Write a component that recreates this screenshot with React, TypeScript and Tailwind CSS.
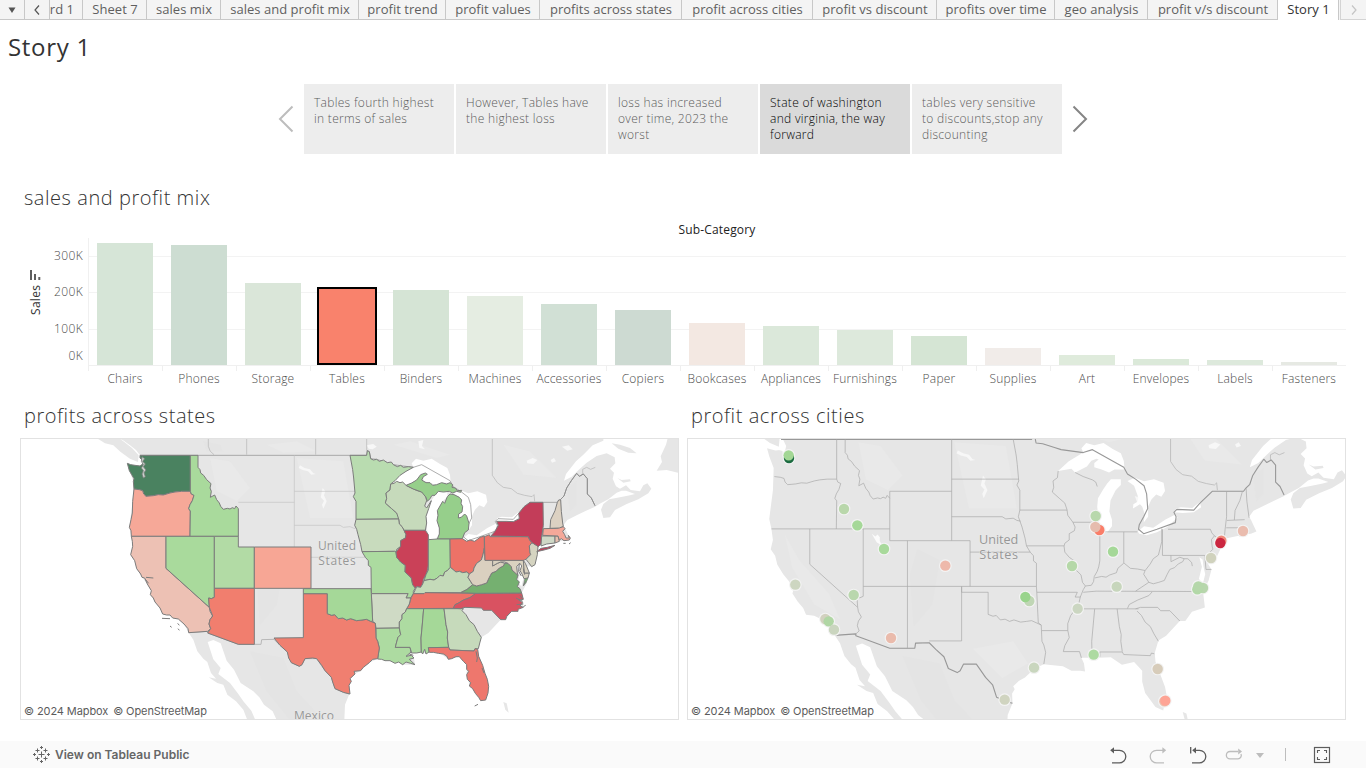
import React from "react";

/* ---------- geography: one drawing space shared by both maps ---------- */

type Shape = { id: string; dx: number; fill: string | null; pts: string };

const NO = null;

const STATES: Shape[] = [
  { id: "WA", dx: 0, fill: "#4a8260", pts: "52,76 62,80 75,82 90,84 98,78 97,66 90,60 90,52 241,52 241,160 215,160 195,162 180,165 160,171 145,170 130,173 108,175 101,168 98,158 88,155 72,153 70,130 72,122 65,110 58,98" },
  { id: "OR", dx: 0, fill: "#f6a898", pts: "72,153 88,155 98,158 101,168 108,175 130,173 145,170 160,171 180,165 195,162 215,160 241,160 244,168 252,172 247,188 240,200 236,212 241,219 240,295 64,295 63,278 58,268 63,245 67,225 68,190" },
  { id: "ID", dx: 0, fill: "#a9da9c", pts: "241,52 264,52 264,88 270,95 272,105 281,112 290,125 303,137 300,150 304,160 301,178 314,171 320,185 328,195 332,205 340,214 352,211 360,213 367,209 374,212 378,204 385,212 385,295 240,295 241,219 236,212 240,200 247,188 252,172 244,168 241,160" },
  { id: "CA", dx: 0, fill: "#edc1b4", pts: "64,295 168,295 168,391 298,508 300,520 308,534 300,545 297,558 302,572 293,580 236,584 234,572 222,558 205,543 188,540 180,531 170,531 158,528 150,510 135,492 130,480 121,470 124,458 112,438 104,420 96,418 92,408 80,392 74,368 62,350 68,325 67,310" },
  { id: "NV", dx: 0, fill: "#a9da9c", pts: "168,295 313,295 313,478 304,482 296,480 298,508 168,391" },
  { id: "UT", dx: 0, fill: "#b2dba5", pts: "313,295 385,295 385,327 433,327 433,451 313,451" },
  { id: "AZ", dx: 0, fill: "#f17e6e", pts: "313,451 433,451 433,619 385,619 293,585 302,572 297,558 300,545 308,534 298,508 296,480 304,482 313,478" },
  { id: "CO", dx: 0, fill: "#f7a695", pts: "433,327 603,327 603,451 433,451" },
  { id: "NM", dx: 0, fill: NO, pts: "433,451 580,451 580,599 492,600 496,604 455,605 453,619 433,619" },
  { id: "MN", dx: 570, fill: "#b9dcb0", pts: "150,52 200,52 202,38 208,41 212,62 220,66 230,64 238,70 250,66 262,74 274,72 280,80 292,86 302,82 310,88 325,86 340,88 318,100 300,112 285,128 272,138 270,156 258,165 260,182 256,195 275,212 290,225 295,232 296,243 168,244 168,190 160,176 165,165 161,120 158,95" },
  { id: "WI", dx: 570, fill: "#c6dabb", pts: "272,138 282,136 290,130 300,134 308,132 318,142 340,153 352,158 365,162 374,168 378,180 380,188 374,204 380,210 394,188 386,212 378,235 380,255 376,277 312,277 306,266 298,258 296,243 290,225 275,212 256,195 260,182 258,165 270,156" },
  { id: "UP", dx: 570, fill: "#96cf8b", pts: "318,142 335,135 350,126 362,110 376,105 382,109 370,116 365,126 378,134 390,134 398,142 410,140 425,134 440,138 450,134 458,140 456,148 466,150 472,158 485,157 482,163 470,160 458,165 448,160 430,162 415,160 405,172 396,172 390,182 382,190 378,178 365,162 340,153" },
  { id: "MI", dx: 570, fill: "#96cf8b", pts: "412,303 418,288 418,270 411,248 414,232 412,218 420,204 428,190 434,196 442,176 450,168 462,170 478,178 485,186 483,196 488,206 486,222 476,228 475,240 484,238 494,228 500,234 507,256 505,276 494,284 487,302 450,303" },
  { id: "IA", dx: 570, fill: "#c8dbbd", pts: "168,244 296,243 298,258 306,266 312,277 318,290 316,300 302,308 302,325 290,334 288,342 284,340 186,341 182,320 174,290 170,274 164,262" },
  { id: "MO", dx: 570, fill: "#acdba0", pts: "186,341 284,340 288,342 290,358 302,372 316,382 315,402 326,412 334,420 338,440 346,450 340,460 340,468 332,480 318,480 324,467 214,467 213,388 205,382 205,368 196,358" },
  { id: "IL", dx: 570, fill: "#ca4158", pts: "312,277 376,277 385,290 385,382 382,398 378,410 370,424 368,438 362,448 350,446 346,450 338,440 334,420 326,412 315,402 316,382 302,372 290,358 288,342 302,325 302,308 316,300 318,290" },
  { id: "IN", dx: 570, fill: "#aadb9e", pts: "385,305 412,303 450,303 451,388 442,398 434,402 430,414 420,412 412,420 402,426 390,424 372,428 378,410 385,396" },
  { id: "OH", dx: 570, fill: "#ed7267", pts: "450,303 487,302 500,310 510,306 524,310 540,298 553,294 553,330 549,350 544,366 530,376 522,390 520,400 508,408 500,402 488,404 478,400 468,402 451,388" },
  { id: "KY", dx: 570, fill: "#c4dab9", pts: "451,388 468,402 478,400 488,404 500,402 508,408 504,418 518,440 500,455 482,464 375,464 372,467 340,467 346,455 350,446 362,448 368,438 372,428 390,424 402,426 412,420 420,412 430,414 434,402 442,398" },
  { id: "TN", dx: 570, fill: "#ed7469", pts: "340,467 372,467 375,464 527,466 518,476 500,482 488,488 474,496 465,500 460,511 320,512 328,498 334,478" },
  { id: "AR", dx: 570, fill: "#cfdac5", pts: "214,467 324,467 318,480 332,480 328,498 320,512 316,522 306,530 306,542 298,552 298,570 228,571 226,556 218,550" },
  { id: "LA", dx: 570, fill: "#addba1", pts: "228,571 298,570 302,590 294,598 290,612 286,628 330,628 333,642 324,650 318,655 334,652 342,660 328,664 345,680 332,676 318,672 308,680 296,672 285,676 270,668 255,668 245,664 233,663 238,630 233,610 228,600" },
  { id: "MS", dx: 570, fill: "#addba1", pts: "320,512 371,512 366,570 363,600 364,642 350,645 335,645 330,628 286,628 290,612 294,598 302,590 298,570 298,552 306,542 306,530 316,522" },
  { id: "AL", dx: 570, fill: "#a5d898", pts: "371,512 432,512 438,560 443,582 442,600 446,628 385,629 387,642 378,648 374,634 368,648 364,642 363,600 366,570" },
  { id: "GA", dx: 570, fill: "#c6dabb", pts: "432,512 490,512 486,518 498,530 508,548 522,560 532,580 544,598 540,612 535,632 525,632 522,639 450,636 446,628 442,600 443,582 438,560" },
  { id: "FL", dx: 570, fill: "#ee776d", pts: "385,629 446,628 450,636 522,639 525,632 533,634 536,655 548,682 555,706 562,724 566,745 564,765 557,786 542,788 536,778 526,766 518,752 508,744 512,734 502,724 500,710 506,700 500,694 500,680 490,670 478,656 468,656 455,662 445,664 440,654 430,648 415,646 400,643 388,643" },
  { id: "NC", dx: 990, fill: "#d95261", pts: "107,466 245,465 250,484 236,486 248,494 240,504 250,508 234,514 234,520 215,520 200,535 197,545 182,545 155,517 130,517 125,510 75,508 62,512 40,511 45,500 54,496 70,486 88,480" },
  { id: "VA", dx: 990, fill: "#75b070", pts: "62,464 82,454 98,440 110,444 125,440 140,435 148,418 155,405 168,400 178,390 190,384 194,376 204,376 214,386 216,396 234,412 230,424 238,432 232,446 240,452 245,465 107,466" },
  { id: "WV", dx: 990, fill: "#dad0c0", pts: "88,408 100,400 102,390 110,376 124,366 129,350 133,330 135,367 158,367 158,384 172,376 182,372 194,376 190,384 178,390 168,400 155,405 148,418 140,435 125,440 110,444 98,440 84,418" },
  { id: "MD", dx: 990, fill: "#dad2c0", pts: "158,367 250,367 253,405 268,405 264,420 252,422 246,408 240,398 245,384 240,376 230,385 232,405 234,412 216,396 214,386 204,376 194,372 182,372 172,376 158,384" },
  { id: "DE", dx: 990, fill: "#dad2c0", pts: "250,367 256,376 262,390 268,405 253,405" },
  { id: "PA", dx: 990, fill: "#ed7469", pts: "133,296 148,290 150,296 265,296 269,306 276,314 268,324 270,344 272,350 258,364 250,367 135,367" },
  { id: "NJ", dx: 990, fill: "#d5d4c1", pts: "276,314 294,324 292,350 285,380 275,386 266,374 258,364 272,350 270,344 268,324" },
  { id: "NY", dx: 990, fill: "#c33d59", pts: "153,294 165,280 175,262 170,250 200,250 220,251 238,242 236,226 252,206 270,193 309,193 310,262 305,296 303,318 295,326 276,314 269,306 265,296" },
  { id: "LI", dx: 990, fill: "#c33d59", pts: "290,341 303,331 322,328 345,322 330,331 312,336" },
  { id: "CT", dx: 990, fill: "#cfd8c6", pts: "305,294 345,294 345,315 320,318 303,324" },
  { id: "RI", dx: 990, fill: "#e8c0b0", pts: "345,294 354,294 358,310 345,315" },
  { id: "MA", dx: 990, fill: "#f5a899", pts: "310,272 350,271 360,268 370,266 375,272 368,280 374,290 378,300 388,300 385,292 391,300 388,306 372,308 364,302 358,306 354,294 308,292" },
  { id: "NH", dx: 990, fill: "#dcd1c2", pts: "352,193 356,186 362,185 364,220 368,255 370,265 358,270 330,271 332,245 345,218" },
  { id: "TX", dx: 570, fill: "#f07f70", pts: "10,467 82,467 82,527 95,532 104,530 115,542 128,540 140,546 152,542 170,548 186,546 200,544 212,550 226,556 228,600 233,610 238,630 233,662 218,664 208,674 190,688 182,698 162,700 165,708 150,722 154,730 147,742 150,768 130,763 105,752 98,732 94,718 75,698 65,682 50,662 38,660 15,662 6,680 -2,685 -26,674 -34,660 -38,642 -60,622 -78,600 10,599" },
  { id: "OK", dx: 570, fill: "#a5d898", pts: "10,452 213,452 214,467 218,550 212,550 200,544 186,546 170,548 152,542 140,546 128,540 115,542 104,530 95,532 82,527 82,467 10,467" },
];

const MAINLAND =
  "M20,0 L38,6 60,22 78,36 90,52 90,66 95,80 75,82 52,76 58,98 70,130 68,190 58,268 64,295 68,325 62,350 74,368 80,392 96,418 112,438 124,458 121,470 135,492 150,510 158,528 180,531 205,543 222,558 236,584 250,605 262,640 280,662 292,672 303,705 318,722 296,718 322,735 340,740 352,770 378,790 400,815 412,846 " +
  "L703,846 705,800 718,768 717,742 724,730 720,722 735,708 752,698 778,674 803,662 815,664 855,668 878,680 902,680 915,682 912,660 905,645 950,645 985,643 1015,664 1048,656 1070,680 1070,710 1078,740 1106,778 1127,788 1136,745 1132,724 1106,655 1104,632 1114,598 1135,585 1172,545 1187,545 1205,520 1240,508 1235,465 1250,436 1258,405 1245,384 1265,386 1282,350 1284,324 1293,322 1348,310 1365,308 1380,302 1365,270 1360,262 1372,246 1400,232 1425,220 1455,206 1472,196 1495,184 1520,164 1535,158 1548,158 " +
  "L1575,168 1560,172 1530,178 1498,184 1480,198 1473,215 1480,240 1500,238 1515,216 1550,198 1585,184 1615,166 1624,152 1612,136 1600,142 1590,160 1562,156 1548,142 1530,152 1518,145 1508,122 1512,104 1500,92 1516,76 1514,58 1490,46 1460,54 1430,74 1408,94 1385,116 1362,128 1368,108 1398,70 1420,50 1448,22 1480,8 1484,-100 L20,-100 Z";

const ISLES = [
  "M-50,-10 L-40,0 -15,16 10,22 32,42 60,62 84,72 86,52 66,30 38,8 10,-12Z",
  "M1505,16 L1530,20 1560,30 1580,46 1555,44 1525,32Z",
  "M1676,-10 L1668,20 1652,55 1656,72 1640,98 1670,96 1720,108 1720,-10Z",
  "M1522,120 L1535,126 1560,124 1562,130 1540,134Z",
  "M1180,792 L1190,796 1196,824 1186,815Z",
];

const WATER = [
  "M293,612 L310,606 332,616 342,645 350,668 372,695 392,735 430,760 448,778 462,800 488,820 500,846 436,846 424,818 400,790 385,768 360,735 325,708 332,690 310,664Z",
  "M842,138 L870,112 910,88 905,76 918,62 940,68 965,62 990,78 1012,90 1020,110 1022,134 995,134 980,142 960,134 940,128 940,116 952,107 946,105 932,110 920,126 888,142 878,132Z",
  "M950,212 L964,188 975,172 985,160 1012,160 1012,176 998,190 984,218 981,248 988,270 988,288 975,305 960,305 953,290 950,258 948,235Z",
  "M1030,165 L1050,156 1075,166 1102,160 1128,170 1132,192 1122,208 1108,202 1095,215 1086,234 1086,262 1074,278 1077,256 1070,234 1064,228 1045,240 1046,228 1056,222 1058,206 1048,178Z",
  "M1058,302 L1075,288 1100,292 1132,270 1160,256 1166,264 1138,290 1110,304 1082,312 1062,308Z",
  "M1156,250 L1162,240 1175,236 1206,238 1226,222 1230,236 1210,250 1180,252Z",
  "M1225,372 L1232,398 1224,430 1234,446 1241,418 1236,396 1234,378Z",
  "M88,52 L96,54 104,70 98,96 104,118 96,110 94,84 82,80 90,66Z",
];

const SMALL_WATER = [
  "M570,82 L584,90 600,94 610,106 618,108 604,110 594,100 578,96 566,90Z",
  "M638,150 L646,160 642,172 650,190 640,212 636,200 642,188 632,178Z",
  "M770,22 L790,18 800,26 788,34 776,32Z",
  "M925,10 L940,6 936,24 945,34 928,30Z",
  "M1250,68 L1268,60 1282,66 1270,78 1252,76Z",
  "M1322,66 L1332,60 1338,70 1326,74Z",
  "M1356,26 L1376,22 1388,34 1372,38Z",
  "M1050,206 L1060,210 1056,222Z",
];

const PROVINCES = [
  "M295,-60 V25 Q298,42 312,50",
  "M410,-60 V50",
  "M617,-60 V50",
  "M770,-60 V38",
  "M1147,-60 V112 L1162,134 1180,148 1204,152 1222,166 1244,172 1266,176 1272,170 1274,190",
  "M1418,108 L1418,94 1430,88 1442,94 1456,88",
];

const BORDER =
  "M90,52 H770 L772,38 778,41 782,62 800,64 832,74 850,80 895,86 910,88 935,80 1020,128 1030,146 1052,160 1075,178 1082,200 1085,240 1074,262 1062,284 1060,296 1074,308 1110,296 1160,278 1162,262 1156,250 1164,242 1210,244 1226,226 1260,193 H1345 L1350,186 1362,174 1370,150 1384,128 1400,106 1408,115 1420,108 1432,122 1432,168 1444,180 1455,203";

const MEX_BORDER =
  "M236,584 L293,580 293,585 385,619 453,619 455,605 492,604 510,622 532,642 544,674 568,685 576,680 585,662 620,662 645,698 664,718 675,752 700,763 718,768";

const ISLETS =
  "M156,541 L180,542 M180,564 L185,568 M203,556 L208,562 M204,572 L208,577 M1094,804 L1104,799 M1360,316 L1367,316 M1377,318 L1382,314 M108,418 L130,420 M106,424 L116,436 M1246,430 L1240,444 M1240,506 L1247,502 M898,648 L910,652";

const SOUND = "M96,56 L104,62 98,70 106,78 100,86 108,96 102,104 106,116 100,120 96,108 100,98 94,90 100,80 94,70Z";

function Basemap({ cities }: { cities?: boolean }) {
  return (
    <g strokeLinejoin="round">
      <path d={MAINLAND} fill="#e6e6e6" />
      {ISLES.map((d) => (
        <path key={d} d={d} fill="#e6e6e6" />
      ))}
      <g fill="#ececec" opacity="0.5">
        <path d="M300,60 L360,70 420,150 380,190 320,160Z" />
        <path d="M560,60 L700,70 730,240 600,240Z" />
        <path d="M850,20 L900,10 1020,50 980,60Z" />
        <path d="M610,620 L720,600 760,660 690,700Z" />
        <path d="M100,310 L140,380 220,470 250,540 180,500 120,400Z" />
        <path d="M1180,20 L1260,40 1340,120 1240,110Z" />
        <path d="M470,20 L560,10 620,40 520,44Z" />
      </g>
      <g fill="#e0e0e0" opacity="0.3">
        <path d="M420,640 L520,660 560,760 640,846 540,846 470,760Z" />
        <path d="M460,350 L520,380 500,500 450,560 440,420Z" />
        <path d="M280,10 L330,20 340,40 290,40Z" />
        <path d="M1370,150 L1400,130 1400,200 1380,220Z" />
      </g>
      {WATER.map((d) => (
        <path key={d} d={d} fill="#ffffff" />
      ))}
      {SMALL_WATER.map((d) => (
        <path key={d} d={d} fill="#f7f7f7" />
      ))}
      {cities && <path d="M336,308 L346,316 352,310 358,318 358,328 364,340 350,332Z" fill="#fbfbfb" />}
      <g fill="none" stroke="#b4b4b4" strokeWidth="2">
        {PROVINCES.map((d) => (
          <path key={d} d={d} />
        ))}
      </g>
      <path d={BORDER} fill="none" stroke={cities ? "#989898" : "#a0a0a0"} strokeWidth={cities ? 3 : 2.6} />
      <path d={MEX_BORDER} fill="none" stroke={cities ? "#989898" : "#b8b8b8"} strokeWidth="3" />
    </g>
  );
}

function Borders() {
  return (
    <g fill="none" stroke="#a9a9a9" strokeWidth="1.9" strokeLinejoin="round">
      <path d="M72,153 L88,155 98,158 101,168 108,175 130,173 145,170 160,171 180,165 195,162 215,160 241,160 M241,52 V160 L244,168 252,172 247,188 240,200 236,212 241,219 240,295 M64,295 H385 M168,295 V391 L298,508 300,520 308,534 300,545 297,558 302,572 293,580 M313,295 V478 L304,482 296,480 298,508 M385,193 V327 H603 V451 M433,327 V619 M313,451 H783 M385,193 H553 M553,52 V327 M264,52 V88 L270,95 272,105 281,112 290,125 303,137 300,150 304,160 301,178 314,171 320,185 328,195 332,205 340,214 352,211 360,213 367,209 374,212 378,204 385,212 M580,451 V599 H492" />
      <g transform="translate(570 0)">
        <path d="M150,52 L158,95 161,120 165,165 160,176 168,190 168,244 164,262 174,290 182,320 186,341 196,358 205,368 205,382 213,388 V452 L214,467 218,550 226,556 228,600 233,610 238,630 233,662 M-17,160 H165 M-17,262 H120 L130,268 150,266 160,272 170,274 M33,358 H196 M168,244 H296 M296,243 L290,225 275,212 256,195 260,182 258,165 270,156 272,138 M296,243 L298,258 312,277 318,290 316,300 302,308 302,325 290,334 288,342 290,358 302,372 316,382 315,402 326,412 334,420 338,440 346,450 340,460 332,480 328,498 320,512 306,530 298,552 298,570 302,590 290,612 286,628 H330 L335,645 M186,341 H288 M312,277 H376 M385,305 V382 L382,398 378,410 370,424 368,438 362,448 346,450 M385,303 H450 V388 L434,402 430,414 412,420 402,426 390,424 372,428 M450,303 H487 M451,388 L468,402 488,404 508,408 522,390 530,376 544,366 553,330 V294 M508,408 L504,418 518,440 482,464 M214,467 H324 L318,480 H332 M340,467 L375,464 665,465 M527,466 L518,476 488,488 465,500 460,511 M320,512 H490 M228,571 H298 M371,512 L363,600 364,642 M432,512 L438,560 443,582 442,600 446,628 M385,642 V629 H446 L450,636 522,639 525,632 533,634 M10,452 V467 H82 V527 L95,532 104,530 115,542 128,540 140,546 152,542 170,548 186,546 200,544 226,556 M318,142 L340,153 365,162 374,168 378,180" />
      </g>
      <g transform="translate(990 0)">
        <path d="M66,518 L78,530 88,548 102,560 112,580 124,600 M62,512 L75,508 122,508 130,517 155,517 182,545 M98,440 L110,444 125,440 140,435 148,418 155,405 168,400 178,390 190,384 194,376 182,372 158,384 158,367 M194,376 L204,376 214,386 216,396 M135,296 V367 H250 L253,405 H268 M150,296 H265 L269,306 276,314 268,324 270,344 272,350 258,364 M276,314 L295,326 M309,193 V262 L305,296 303,318 M310,272 L358,270 M308,292 H354 L358,306 M345,294 V315 M352,193 L345,218 332,245 330,271 M362,185 L364,220 370,265" />
      </g>
    </g>
  );
}

function Attribution() {
  return (
    <div className="absolute bottom-0 left-[1px] flex h-[16px] w-[187px] items-center gap-[5px] bg-white/70 pl-[2px] font-['Inter','Liberation_Sans',sans-serif] text-[11px] leading-none tracking-[-0.1px] whitespace-nowrap text-[#5b5b5b]">
      <span>© 2024 Mapbox</span>
      <span>© OpenStreetMap</span>
    </div>
  );
}

const LABEL = "'Open Sans','Noto Sans',sans-serif";

function StatesMap() {
  return (
    <div className="relative h-[282px] w-[659px] overflow-hidden border border-[#e2e2e2] bg-white">
      <svg className="block h-[280px] w-[657px]" viewBox="-267 3 1971 840">
        <Basemap />
        <path
          d="M385,193 H553 M553,52 V327 M553,160 H735 M553,262 H690 L700,268 720,266 735,272 M603,358 H766"
          fill="none"
          stroke="#c2c2c2"
          strokeWidth="2"
        />
        <g stroke="#7c7c7c" strokeWidth="3" strokeLinejoin="round">
          {STATES.filter((s) => s.fill).map((s) => (
            <polygon key={s.id} points={s.pts} fill={s.fill as string} transform={`translate(${s.dx} 0)`} />
          ))}
          <path d={SOUND} fill="#c9d2cd" strokeWidth="2.4" />
          <path d="M1244,424 L1254,420 1248,434 1240,444Z" fill="#75b070" strokeWidth="2" />
          <path d={ISLETS} fill="none" strokeWidth="3" />
          <path
            d="M1228,376 L1226,400 1234,414 M1240,392 L1244,410 M1218,480 L1238,490 M1220,500 L1240,498 M1230,472 L1236,482 M1098,640 L1102,660 1100,672 M1116,690 L1122,705"
            fill="none"
            strokeWidth="3"
          />
        </g>
        <path
          d="M1350,186 L1362,174 1370,150 1384,128 1400,106 1408,115 1420,108 1432,122 1432,168 1444,180 1455,203"
          fill="none"
          stroke="#909090"
          strokeWidth="3"
        />
        <g fontFamily={LABEL} fontSize="36" fill="#979797" textAnchor="middle" stroke="#ebebeb" strokeWidth="3" paintOrder="stroke">
          <text x="681" y="335" textLength="114">United</text>
          <text x="681" y="380" textLength="112">States</text>
          <text x="612" y="847" textLength="120">Mexico</text>
        </g>
      </svg>
      <Attribution />
    </div>
  );
}

const CITIES: [number, number, string][] = [
  [306, 60, "#1c6b41"],
  [305, 52, "#a3d795"],
  [471, 213, "#b9d7ab"],
  [511, 262, "#a5d898"],
  [591, 333, "#a8d99b"],
  [325, 440, "#cdd6c1"],
  [500, 471, "#b9d7ad"],
  [415, 543, "#d2d1bf"],
  [425, 550, "#b0d6a4"],
  [441, 575, "#cad5bf"],
  [612, 600, "#eabbac"],
  [1226, 234, "#b8d8ac"],
  [1237, 276, "#fa7d68"],
  [1225, 267, "#e6bcae"],
  [1278, 341, "#a5d898"],
  [1155, 384, "#b5d8a8"],
  [1289, 446, "#c7d6bc"],
  [1027, 489, "#c0d6b5"],
  [1015, 477, "#99d48c"],
  [1172, 512, "#cbd6c1"],
  [1220, 650, "#addaa1"],
  [1041, 689, "#c9d6be"],
  [953, 785, "#d0d4c0"],
  [775, 383, "#eeb9ab"],
  [1668, 279, "#eabcae"],
  [1603, 308, "#f08a79"],
  [1600, 315, "#cb2640"],
  [1572, 360, "#d0d2bd"],
  [1548, 450, "#b7d6ac"],
  [1531, 454, "#b2d8a7"],
  [1534, 445, "#b5d7aa"],
  [1412, 693, "#d7ccba"],
  [1432, 790, "#eac0ae"],
  [1435, 788, "#fea495"],
];

function CitiesMap() {
  return (
    <div className="relative h-[282px] w-[659px] overflow-hidden border border-[#e2e2e2] bg-white">
      <svg className="block h-[280px] w-[657px]" viewBox="3 3 1971 840">
        <g transform="translate(182.6 -53.5) scale(1.1056)">
          <Basemap cities />
          <Borders />
        </g>
        <g fontFamily={LABEL} fontSize="38" fill="#979797" textAnchor="middle" stroke="#ebebeb" strokeWidth="3" paintOrder="stroke">
          <text x="935" y="317" textLength="118">United</text>
          <text x="935" y="363" textLength="116">States</text>
        </g>
        {CITIES.map(([x, y]) => (
          <circle key={`h${x}-${y}`} cx={x} cy={y} r="19" fill="#f3f3f3" />
        ))}
        {CITIES.map(([x, y, c]) => (
          <circle key={`${x}-${y}`} cx={x} cy={y} r="15.6" fill={c} />
        ))}
      </svg>
      <Attribution />
    </div>
  );
}

/* ---------- tabs ---------- */

const TABS: [string, string][] = [
  ["Sheet 7", "w-[64px]"],
  ["sales mix", "w-[74px]"],
  ["sales and profit mix", "w-[138px]"],
  ["profit trend", "w-[87px]"],
  ["profit values", "w-[94px]"],
  ["profits across states", "w-[142px]"],
  ["profit across cities", "w-[131px]"],
  ["profit vs discount", "w-[124px]"],
  ["profits over time", "w-[118px]"],
  ["geo analysis", "w-[93px]"],
  ["profit v/s discount", "w-[130px]"],
];

function TabBar() {
  return (
    <div className="flex h-[20px] w-full overflow-hidden bg-[#f4f4f4] text-[13px] leading-[18px] tracking-[0.03px] whitespace-nowrap text-[#5f5f5f]">
      <div className="flex w-[25px] items-center justify-center border-r border-b border-[#c8c8c8]">
        <svg className="h-[6px] w-[8px]" viewBox="0 0 8 6">
          <path d="M0.5,0.5 H7.5 L4,6Z" fill="#555" />
        </svg>
      </div>
      <div className="flex w-[24px] items-center justify-center border-b border-[#c8c8c8]">
        <svg className="h-[10px] w-[6px]" viewBox="0 0 6 10">
          <path d="M5,0.5 L1,5 5,9.5" fill="none" stroke="#555" strokeWidth="1.2" />
        </svg>
      </div>
      <div className="flex w-[34px] justify-end overflow-hidden border-r border-b border-l border-[#c8c8c8] pr-[8px]">ard 1</div>
      {TABS.map(([t, w]) => (
        <div key={t} className={`flex shrink-0 justify-center border-r border-b border-[#c8c8c8] pl-[1px] ${w}`}>
          {t}
        </div>
      ))}
      <div className="flex w-[61px] shrink-0 justify-center border-r border-[#c8c8c8] bg-white pl-[1px] text-[#333]">Story 1</div>
      <div className="ml-[1px] flex flex-1 items-center justify-center border-b border-l border-[#d4d4d4]">
        <svg className="h-[10px] w-[6px]" viewBox="0 0 6 10">
          <path d="M1,0.5 L5,5 1,9.5" fill="none" stroke="#c4c4c4" strokeWidth="1.2" />
        </svg>
      </div>
    </div>
  );
}

/* ---------- story points ---------- */

const POINTS: string[][] = [
  ["Tables fourth highest", "in terms of sales"],
  ["However, Tables have", "the highest loss"],
  ["loss has increased", "over time, 2023 the", "worst"],
  ["State of washington", "and virginia, the way", "forward"],
  ["tables very sensitive", "to discounts,stop any", "discounting"],
];

function StoryNav() {
  return (
    <div className="flex h-[70px] items-center justify-center">
      <svg className="mr-[10px] h-[28px] w-[16px]" viewBox="0 0 16 28">
        <path d="M14.5,1.5 L2,14 14.5,26.5" fill="none" stroke="#bdbdbd" strokeWidth="2" />
      </svg>
      <div className="flex gap-[2px]">
        {POINTS.map((lines, i) => (
          <div
            key={lines[0]}
            className={`h-[70px] w-[150px] px-[10px] pt-[11px] text-[12px] leading-[16px] font-light tracking-[0.3px] whitespace-nowrap ${
              i === 3 ? "bg-[#dadada] text-[#000]" : "bg-[#ededed] text-[#5c5c5c]"
            }`}
          >
            {lines.map((l) => (
              <div key={l}>{l}</div>
            ))}
          </div>
        ))}
      </div>
      <svg className="ml-[10px] h-[28px] w-[16px]" viewBox="0 0 16 28">
        <path d="M1.5,1.5 L14,14 1.5,26.5" fill="none" stroke="#858585" strokeWidth="2" />
      </svg>
    </div>
  );
}

/* ---------- bar chart ---------- */

const BARS: [string, number, string][] = [
  ["Chairs", 122, "#d6e5d7"],
  ["Phones", 120, "#cdddd2"],
  ["Storage", 82, "#dae6d9"],
  ["Tables", 78, "#f9826c"],
  ["Binders", 75, "#d5e4d5"],
  ["Machines", 69, "#e5ede2"],
  ["Accessories", 61, "#d1e0d5"],
  ["Copiers", 55, "#cddad2"],
  ["Bookcases", 42, "#f3e8e2"],
  ["Appliances", 39, "#dbe8da"],
  ["Furnishings", 35, "#dde9dc"],
  ["Paper", 29, "#d5e5d4"],
  ["Supplies", 17, "#f1ece9"],
  ["Art", 10, "#dfebdc"],
  ["Envelopes", 6, "#dbe9d9"],
  ["Labels", 5, "#dde9dc"],
  ["Fasteners", 3, "#e6e9e3"],
];

function BarChart() {
  return (
    <div className="flex h-[166px] pl-[24px]">
      <div className="flex w-[24px] flex-col items-center pt-[48px]">
        <svg className="ml-[-1px] h-[10px] w-[12px]" viewBox="0 0 12 10">
          <path d="M1,0 V10 M5,4 V10 M9.3,7 V10" stroke="#5f5f5f" strokeWidth="2" />
        </svg>
        <div className="mt-[1px] h-[34px] rotate-180 text-[12px] leading-[16px] tracking-[0.3px] text-[#333] [writing-mode:vertical-rl]">Sales</div>
      </div>
      <div className="flex w-[35px] flex-col items-end text-[12px] leading-[16px] font-light tracking-[0.35px] text-[#4c4c4c]">
        <div className="mt-[26px]">300K</div>
        <div className="mt-[20px]">200K</div>
        <div className="mt-[21px]">100K</div>
        <div className="mt-[11px]">0K</div>
      </div>
      <div className="ml-[5px] flex w-[1258px] flex-col">
        <div className="text-center text-[12px] leading-[16px] tracking-[0.15px] text-[#222]">Sub-Category</div>
        <div className="h-[128px] border-b border-l border-[#f0f0f0] bg-[linear-gradient(to_bottom,transparent_18px,#f3f3f3_18px,#f3f3f3_19px,transparent_19px,transparent_54px,#f3f3f3_54px,#f3f3f3_55px,transparent_55px,transparent_91px,#f3f3f3_91px,#f3f3f3_92px,transparent_92px)]">
          <div className="-ml-px flex h-full items-end">
            {BARS.map(([n, h, c]) => (
              <div key={n} className="flex w-[74px] shrink-0 justify-center">
                <div
                  className={n === "Tables" ? "w-[60px] border-2 border-black" : "w-[56px]"}
                  style={{ height: h, backgroundColor: c }}
                />
              </div>
            ))}
          </div>
        </div>
        <div className="flex">
          {BARS.map(([n]) => (
            <div key={n} className="flex w-[74px] shrink-0 flex-col text-center text-[12px] leading-[16px] font-light tracking-[0.2px] text-[#4c4c4c]">
              <div className="h-[5px] border-l border-[#efefef]" />
              <span>{n}</span>
            </div>
          ))}
        </div>
      </div>
    </div>
  );
}

/* ---------- footer ---------- */

function Plus({ x, y, r }: { x: number; y: number; r: number }) {
  return <path d={`M${x - r},${y} H${x + r} M${x},${y - r} V${y + r}`} />;
}

function Footer() {
  return (
    <div className="flex h-[27px] items-center bg-[#fafafa] pl-[33px]">
      <svg className="h-[17px] w-[17px]" viewBox="0 0 17 17" fill="none" stroke="#666" strokeWidth="1">
        <Plus x={8.5} y={8.5} r={3} />
        <Plus x={4.5} y={4.5} r={2} />
        <Plus x={12.5} y={4.5} r={2} />
        <Plus x={4.5} y={12.5} r={2} />
        <Plus x={12.5} y={12.5} r={2} />
        <Plus x={8.5} y={1.5} r={1.5} />
        <Plus x={8.5} y={15.5} r={1.5} />
        <Plus x={1.5} y={8.5} r={1.5} />
        <Plus x={15.5} y={8.5} r={1.5} />
      </svg>
      <span className="ml-[5px] font-['Inter','Liberation_Sans',sans-serif] text-[12px] font-semibold text-[#666]">View on Tableau Public</span>
      <div className="ml-auto flex h-full items-center pr-[34px]">
        <svg className="h-[27px] w-[222px]" viewBox="0 0 222 27" fill="none">
          <g stroke="#5c5c5c" strokeWidth="1.3">
            <path d="M2,9.3 H9.5 A6.3,6.3 0 0 1 9.5,21.9 H2" />
            <path d="M0.2,9.3 L4,6.2 V12.4Z" fill="#5c5c5c" stroke="none" />
          </g>
          <g stroke="#bdbdbd" strokeWidth="1.3">
            <path d="M54,9.3 H46.5 A6.3,6.3 0 0 0 46.5,21.9 H54" />
            <path d="M56.2,9.3 L52.4,6.2 V12.4Z" fill="#bdbdbd" stroke="none" />
          </g>
          <g stroke="#5c5c5c" strokeWidth="1.3">
            <path d="M84,9.3 H89.5 A6.3,6.3 0 0 1 89.5,21.9 H82 M80.7,6 V12.6" />
            <path d="M82.2,9.3 L86,6.2 V12.4Z" fill="#5c5c5c" stroke="none" />
          </g>
          <g stroke="#bdbdbd" strokeWidth="1.3">
            <path d="M128,10.5 H120 A3.6,3.6 0 0 0 120,17.8 H128 A3.4,3.4 0 0 0 131,13" />
            <path d="M132,10.5 L128.2,7.4 V13.6Z" fill="#bdbdbd" stroke="none" />
          </g>
          <path d="M144,12 H152 L148,17Z" fill="#bdbdbd" transform="translate(2 0)" />
          <path d="M175.5,7 V20" stroke="#bdbdbd" />
          <rect x="204.5" y="6.5" width="15" height="15" stroke="#5c5c5c" strokeWidth="1.2" />
          <path d="M207.5,12 V9.5 H210 M214,9.5 H216.5 V12 M216.5,16 V18.5 H214 M210,18.5 H207.5 V16" stroke="#5c5c5c" strokeWidth="1.1" />
        </svg>
      </div>
    </div>
  );
}

const HEADING = "ml-[4px] h-[28px] text-[20px] leading-[28px] font-light tracking-[0.55px] text-[#333]";

export default function App() {
  return (
    <div className="flex h-[768px] w-[1366px] flex-col overflow-hidden bg-white font-['Open_Sans','Noto_Sans',sans-serif]">
      <TabBar />
      <h1 className="mt-[10px] ml-[8px] h-[34px] text-[24px] leading-[34px] font-normal tracking-[0.7px] text-[#333]">Story 1</h1>
      <div className="mt-[20px]">
        <StoryNav />
      </div>
      <div className="mt-[30px] pl-[20px]">
        <h2 className={HEADING}>sales and profit mix</h2>
      </div>
      <div className="mt-[10px]">
        <BarChart />
      </div>
      <div className="mt-[14px] flex gap-[8px] pl-[20px]">
        <section>
          <h2 className={HEADING}>profits across states</h2>
          <div className="mt-[8px]">
            <StatesMap />
          </div>
        </section>
        <section>
          <h2 className={HEADING}>profit across cities</h2>
          <div className="mt-[8px]">
            <CitiesMap />
          </div>
        </section>
      </div>
      <div className="mt-auto">
        <Footer />
      </div>
    </div>
  );
}
